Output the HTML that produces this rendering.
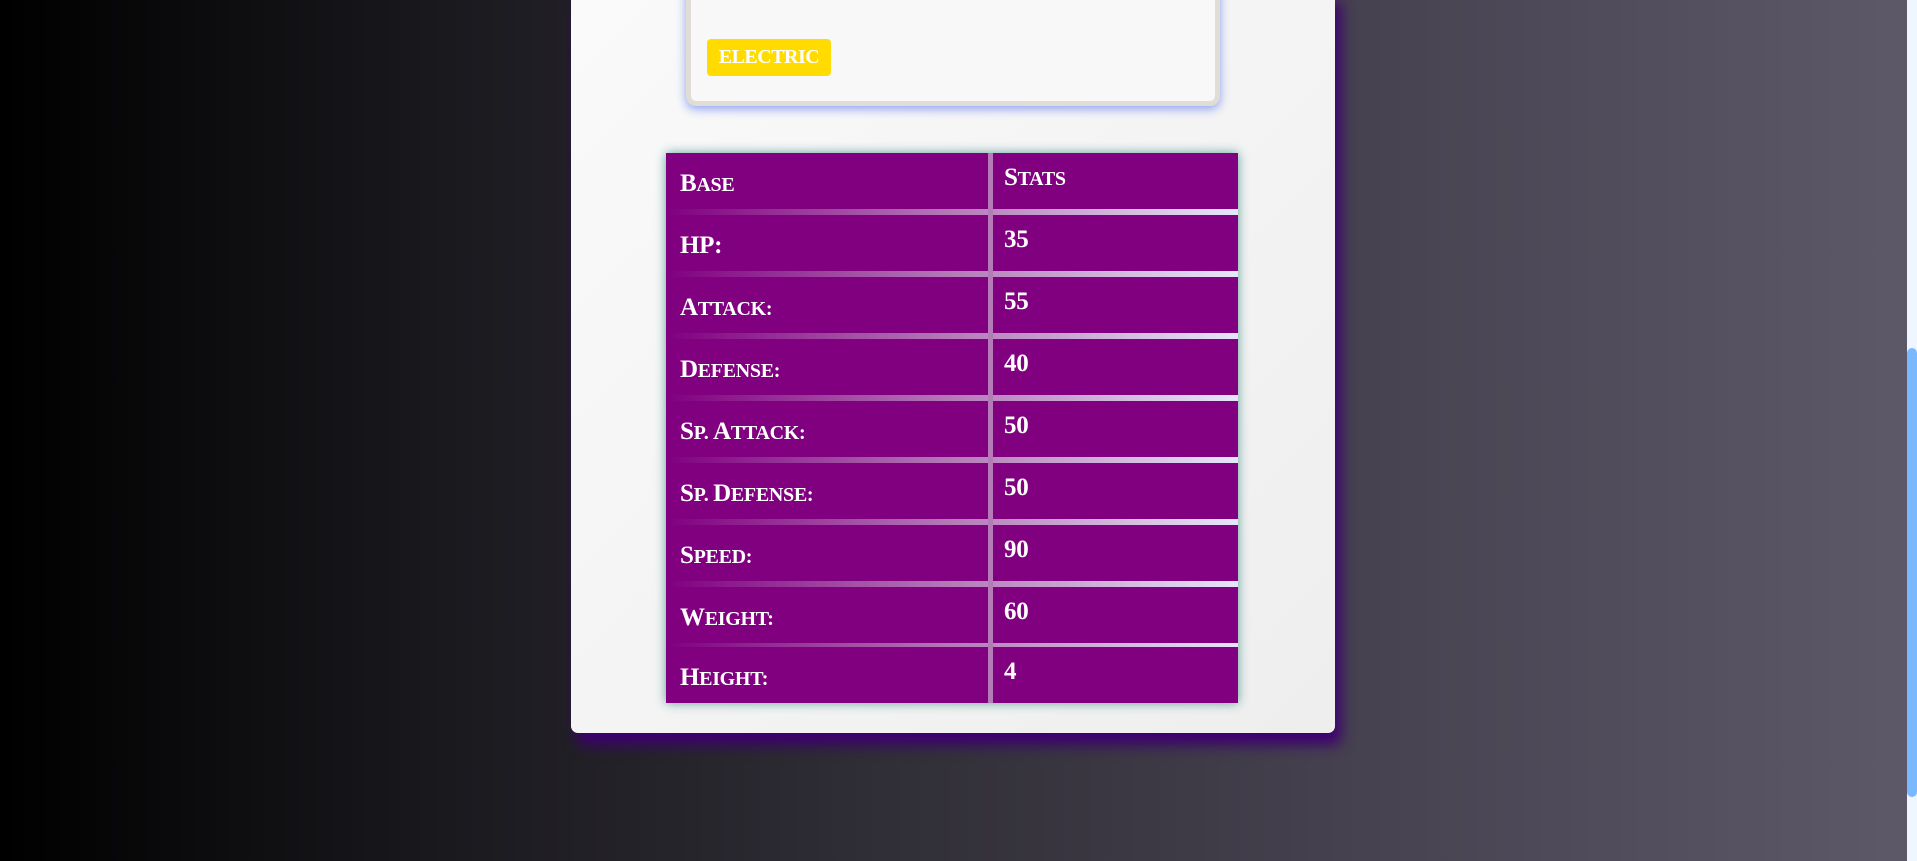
<!DOCTYPE html>
<html><head><meta charset="utf-8"><style>
*{margin:0;padding:0;box-sizing:border-box}
html,body{width:1917px;height:861px;overflow:hidden}
body{background:linear-gradient(90deg,#000 0%,#1c1b20 25%,#2f2d35 45%,#45414f 70%,#5d5969 100%);position:relative;font-family:"Liberation Serif",serif}
.panel{position:absolute;left:571px;top:-10px;width:764px;height:743px;background:linear-gradient(135deg,#fafafa,#eeeeee);border-radius:0 0 7px 7px;box-shadow:6px 12px 14px #3e0070}
.card{position:absolute;left:686px;top:-20px;width:534px;height:126px;background:#f8f8f8;border:5px solid #e0ddd6;border-radius:10px;box-shadow:0 3px 10px #8c9ff5}
.badge{position:absolute;left:707px;top:39px;width:124px;height:37px;background:#ffdb00;border-radius:4px;color:#fff;font-weight:bold;font-size:20px;line-height:37px;text-align:center;letter-spacing:-0.5px}
.tbl{position:absolute;left:666px;top:153px;width:572px;height:550px;background:linear-gradient(90deg,#800080 0%,#b57ab8 50%,#e6e6fa 100%);box-shadow:0 0 10px #5f9f9c}
.row{position:absolute;left:0;width:572px;height:56px}
.c1,.c2{position:absolute;top:0;height:56px;background:#800080;color:#fff;font-weight:bold;font-size:20px;text-transform:uppercase;letter-spacing:-0.3px}
.c1 b,.c2 b{font-size:25px}
.c1{left:0;width:322px;padding:17px 0 0 14px}
.c2{left:327px;width:245px;padding:11px 0 0 11px;font-size:25px}
.vsep{position:absolute;left:322px;top:0;width:5px;height:550px;background:#b57ab8}
.sb{position:absolute;left:1907px;top:0;width:10px;height:861px;background:#f0f6ff}
.th{position:absolute;left:1907px;top:348px;width:10px;height:449px;background:#7ab8ff;border-radius:5px}
</style></head><body>
<div class="panel"></div>
<div class="card"></div>
<div class="badge">ELECTRIC</div>
<div class="tbl">
<div class="vsep"></div>
<div class="row" style="top:0"><div class="c1"><b>B</b>ase</div><div class="c2" style="font-size:20px"><b>S</b>tats</div></div>
<div class="row" style="top:62px"><div class="c1"><b>HP:</b></div><div class="c2">35</div></div>
<div class="row" style="top:124px"><div class="c1"><b>A</b>ttack:</div><div class="c2">55</div></div>
<div class="row" style="top:186px"><div class="c1"><b>D</b>efense:</div><div class="c2">40</div></div>
<div class="row" style="top:248px"><div class="c1"><b>S</b>p. <b>A</b>ttack:</div><div class="c2">50</div></div>
<div class="row" style="top:310px"><div class="c1"><b>S</b>p. <b>D</b>efense:</div><div class="c2">50</div></div>
<div class="row" style="top:372px"><div class="c1"><b>S</b>peed:</div><div class="c2">90</div></div>
<div class="row" style="top:434px"><div class="c1"><b>W</b>eight:</div><div class="c2">60</div></div>
<div class="row" style="top:494px"><div class="c1"><b>H</b>eight:</div><div class="c2">4</div></div>
</div>
<div class="sb"></div><div class="th"></div>
</body></html>
